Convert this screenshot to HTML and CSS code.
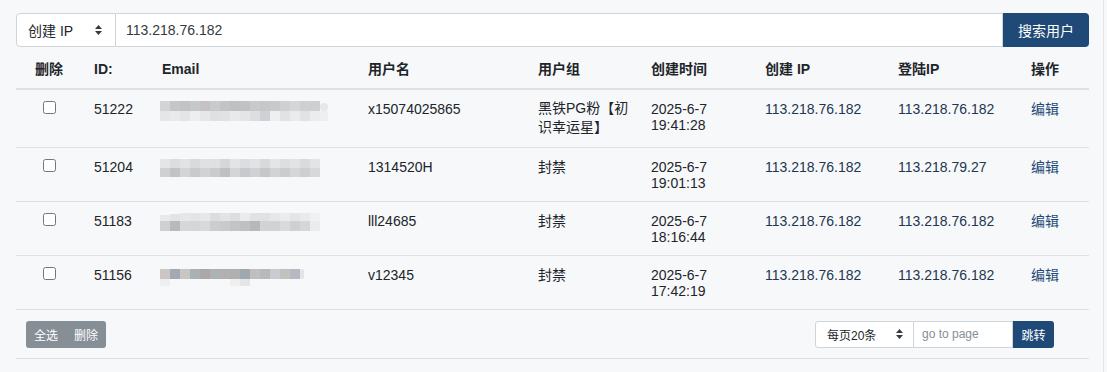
FILE: index.html
```
<!DOCTYPE html>
<html lang="zh-CN">
<head>
    <meta charset="UTF-8">
    <title>用户列表</title>
    <link rel="stylesheet" href="styles.css">
</head>
<body>
    <div class="page">
        <div class="search-bar">
            <div class="search-field">
                <span>创建 IP</span>
                <svg class="caret" width="7" height="10" viewBox="0 0 7 10"><path d="M3.5 0L7 4H0z M0 6h7L3.5 10z" fill="#343a40"/></svg>
            </div>
            <input class="search-input" type="text" value="113.218.76.182">
            <button class="btn btn-primary search-btn">搜索用户</button>
        </div>

        <table class="user-table">
            <colgroup>
                <col class="w-check"><col class="w-id"><col class="w-email"><col class="w-name">
                <col class="w-group"><col class="w-time"><col class="w-ip"><col class="w-ip"><col class="w-op">
            </colgroup>
            <thead>
                <tr>
                    <th class="center">删除</th>
                    <th>ID:</th>
                    <th>Email</th>
                    <th>用户名</th>
                    <th>用户组</th>
                    <th>创建时间</th>
                    <th>创建 IP</th>
                    <th>登陆IP</th>
                    <th>操作</th>
                </tr>
            </thead>
            <tbody>
                <tr>
                    <td class="center"><input type="checkbox" class="check"></td>
                    <td>51222</td>
                    <td>
                        <svg class="mosaic" width="170" height="20" viewBox="0 0 170 20">
                            <rect x="0" y="0" width="10" height="10" fill="#d3d4d6"/><rect x="10" y="0" width="10" height="10" fill="#c5c6c8"/>
                            <rect x="20" y="0" width="10" height="10" fill="#c2c3c5"/><rect x="30" y="0" width="10" height="10" fill="#c6c7c9"/>
                            <rect x="40" y="0" width="10" height="10" fill="#c4c2c3"/><rect x="50" y="0" width="10" height="10" fill="#c8cacd"/>
                            <rect x="60" y="0" width="10" height="10" fill="#c3c4c6"/><rect x="70" y="0" width="10" height="10" fill="#bfc0c2"/>
                            <rect x="80" y="0" width="10" height="10" fill="#c1c2c5"/><rect x="90" y="0" width="10" height="10" fill="#c8c9cb"/>
                            <rect x="100" y="0" width="10" height="10" fill="#c5c7ca"/><rect x="110" y="0" width="10" height="10" fill="#c8c9ca"/>
                            <rect x="120" y="0" width="10" height="10" fill="#cfd0d1"/><rect x="130" y="0" width="10" height="10" fill="#d4d6d9"/>
                            <rect x="140" y="0" width="10" height="10" fill="#d0cfd1"/><rect x="150" y="0" width="10" height="10" fill="#cdcfd1"/>
                            <rect x="160" y="2" width="8" height="8" rx="4" fill="#e6e7e8"/>
                            <rect x="0" y="10" width="10" height="10" fill="#e5e6e7"/><rect x="10" y="10" width="10" height="10" fill="#e9eaea"/>
                            <rect x="20" y="10" width="10" height="10" fill="#e3e4e5"/><rect x="30" y="10" width="10" height="10" fill="#eceef0"/>
                            <rect x="40" y="10" width="10" height="10" fill="#e6e7e6"/><rect x="50" y="10" width="10" height="10" fill="#dfe0e2"/>
                            <rect x="60" y="10" width="10" height="10" fill="#e1e2e4"/><rect x="70" y="10" width="10" height="10" fill="#e8e9ea"/>
                            <rect x="80" y="10" width="10" height="10" fill="#e4e5e6"/><rect x="90" y="10" width="10" height="10" fill="#dcdedf"/>
                            <rect x="100" y="10" width="10" height="10" fill="#cdd0d4"/><rect x="110" y="10" width="10" height="10" fill="#eeeff0"/>
                            <rect x="120" y="10" width="10" height="10" fill="#e1e2e4"/><rect x="130" y="10" width="10" height="10" fill="#eaebec"/>
                            <rect x="140" y="10" width="10" height="10" fill="#e0e2e5"/><rect x="150" y="10" width="10" height="10" fill="#ebecee"/>
                            <rect x="160" y="10" width="8" height="10" fill="#eeeff0"/>
                        </svg>
                    </td>
                    <td>x15074025865</td>
                    <td class="wrap">黑铁PG粉【初<br>识幸运星】</td>
                    <td>2025-6-7 19:41:28</td>
                    <td class="ip">113.218.76.182</td>
                    <td class="ip">113.218.76.182</td>
                    <td><a href="#" class="edit">编辑</a></td>
                </tr>
                <tr>
                    <td class="center"><input type="checkbox" class="check"></td>
                    <td>51204</td>
                    <td>
                        <svg class="mosaic" width="170" height="20" viewBox="0 0 170 20">
                            <rect x="0" y="0" width="10" height="9" fill="#e4e5e6"/><rect x="10" y="0" width="10" height="9" fill="#dcdde0"/>
                            <rect x="20" y="0" width="10" height="9" fill="#e2e3e5"/><rect x="30" y="0" width="10" height="9" fill="#d9dadc"/>
                            <rect x="40" y="0" width="10" height="9" fill="#e0e1e3"/><rect x="50" y="0" width="10" height="9" fill="#dfe0e2"/>
                            <rect x="60" y="0" width="10" height="9" fill="#d6d7d9"/><rect x="70" y="0" width="10" height="9" fill="#e3e4e5"/>
                            <rect x="80" y="0" width="10" height="9" fill="#dcdde0"/><rect x="90" y="0" width="10" height="9" fill="#e1e2e4"/>
                            <rect x="100" y="0" width="10" height="9" fill="#d8d9db"/><rect x="110" y="0" width="10" height="9" fill="#e4e5e7"/>
                            <rect x="120" y="0" width="10" height="9" fill="#dddee0"/><rect x="130" y="0" width="10" height="9" fill="#e2e3e5"/>
                            <rect x="140" y="0" width="10" height="9" fill="#dadbdd"/><rect x="150" y="0" width="10" height="9" fill="#e3e4e6"/>
                            <rect x="0" y="9" width="10" height="9" fill="#cfd0d2"/><rect x="10" y="9" width="10" height="9" fill="#c2c3c6"/>
                            <rect x="20" y="9" width="10" height="9" fill="#d3d4d6"/><rect x="30" y="9" width="10" height="9" fill="#c9cacc"/>
                            <rect x="40" y="9" width="10" height="9" fill="#d1d2d4"/><rect x="50" y="9" width="10" height="9" fill="#cacbcd"/>
                            <rect x="60" y="9" width="10" height="9" fill="#bfc0c3"/><rect x="70" y="9" width="10" height="9" fill="#d4d5d7"/>
                            <rect x="80" y="9" width="10" height="9" fill="#c8c9cc"/><rect x="90" y="9" width="10" height="9" fill="#d0d1d3"/>
                            <rect x="100" y="9" width="10" height="9" fill="#c6c7ca"/><rect x="110" y="9" width="10" height="9" fill="#d2d3d5"/>
                            <rect x="120" y="9" width="10" height="9" fill="#cbcccf"/><rect x="130" y="9" width="10" height="9" fill="#d5d6d8"/>
                            <rect x="140" y="9" width="10" height="9" fill="#cdced0"/><rect x="150" y="9" width="10" height="9" fill="#d7d8da"/>
                        </svg>
                    </td>
                    <td>1314520H</td>
                    <td>封禁</td>
                    <td>2025-6-7 19:01:13</td>
                    <td class="ip">113.218.76.182</td>
                    <td class="ip">113.218.79.27</td>
                    <td><a href="#" class="edit">编辑</a></td>
                </tr>
                <tr>
                    <td class="center"><input type="checkbox" class="check"></td>
                    <td>51183</td>
                    <td>
                        <svg class="mosaic" width="170" height="20" viewBox="0 0 170 20">
                            <rect x="0" y="2" width="10" height="6" fill="#e8e9eb"/><rect x="10" y="1" width="10" height="7" fill="#e3e4e6"/>
                            <rect x="20" y="0" width="10" height="8" fill="#e6e7e9"/><rect x="30" y="0" width="10" height="8" fill="#e4e5e7"/>
                            <rect x="40" y="0" width="10" height="8" fill="#e7e8ea"/><rect x="50" y="0" width="10" height="8" fill="#dcdde0"/>
                            <rect x="60" y="0" width="10" height="8" fill="#e2e3e5"/><rect x="70" y="0" width="10" height="8" fill="#dddee0"/>
                            <rect x="80" y="0" width="10" height="8" fill="#eaebec"/><rect x="90" y="0" width="10" height="8" fill="#e1e2e5"/>
                            <rect x="100" y="0" width="10" height="8" fill="#e0e1e4"/><rect x="110" y="0" width="10" height="8" fill="#e6e7e9"/>
                            <rect x="120" y="0" width="10" height="8" fill="#ebeced"/><rect x="130" y="0" width="10" height="8" fill="#e4e5e7"/>
                            <rect x="140" y="0" width="10" height="8" fill="#e9eaeb"/><rect x="150" y="0" width="10" height="8" fill="#f0f1f2"/>
                            <rect x="0" y="8" width="10" height="10" fill="#cfd0d1"/><rect x="10" y="8" width="10" height="10" fill="#b8b8bd"/>
                            <rect x="20" y="8" width="10" height="10" fill="#d6d7da"/><rect x="30" y="8" width="10" height="10" fill="#d5d6d9"/>
                            <rect x="40" y="8" width="10" height="10" fill="#d9d9db"/><rect x="50" y="8" width="10" height="10" fill="#cdcdcf"/>
                            <rect x="60" y="8" width="10" height="10" fill="#c9cad0"/><rect x="70" y="8" width="10" height="10" fill="#c4c4c7"/>
                            <rect x="80" y="8" width="10" height="10" fill="#bfc0c1"/><rect x="90" y="8" width="10" height="10" fill="#b7b8be"/>
                            <rect x="100" y="8" width="10" height="10" fill="#d3d3d4"/><rect x="110" y="8" width="10" height="10" fill="#d1d2d2"/>
                            <rect x="120" y="8" width="10" height="10" fill="#d9dadd"/><rect x="130" y="8" width="10" height="10" fill="#cfd0d2"/>
                            <rect x="140" y="8" width="10" height="10" fill="#d4d6d9"/><rect x="150" y="8" width="10" height="10" fill="#eaebec"/>
                        </svg>
                    </td>
                    <td>lll24685</td>
                    <td>封禁</td>
                    <td>2025-6-7 18:16:44</td>
                    <td class="ip">113.218.76.182</td>
                    <td class="ip">113.218.76.182</td>
                    <td><a href="#" class="edit">编辑</a></td>
                </tr>
                <tr>
                    <td class="center"><input type="checkbox" class="check"></td>
                    <td>51156</td>
                    <td>
                        <svg class="mosaic" width="170" height="20" viewBox="0 0 170 20">
                            <rect x="0" y="2" width="10" height="10" fill="#cbc6c4"/><rect x="10" y="2" width="10" height="10" fill="#a3a9b2"/>
                            <rect x="20" y="2" width="10" height="10" fill="#c9c5c4"/><rect x="30" y="2" width="10" height="10" fill="#aab0b4"/>
                            <rect x="40" y="2" width="10" height="10" fill="#aca8aa"/><rect x="50" y="2" width="10" height="10" fill="#abb3b5"/>
                            <rect x="60" y="2" width="10" height="10" fill="#b3b0b1"/><rect x="70" y="2" width="10" height="10" fill="#b0b0af"/>
                            <rect x="80" y="2" width="10" height="10" fill="#a0a8af"/><rect x="90" y="2" width="10" height="10" fill="#c0bebf"/>
                            <rect x="100" y="2" width="10" height="10" fill="#b8b9b9"/><rect x="110" y="2" width="10" height="10" fill="#c9cbd0"/>
                            <rect x="120" y="2" width="10" height="10" fill="#c3c1bf"/><rect x="130" y="2" width="10" height="10" fill="#b6b8c2"/>
                            <rect x="140" y="2" width="4" height="10" rx="2" fill="#e3e4e7"/>
                            <rect x="0" y="12" width="10" height="7" fill="#eeeff1"/>
                            <rect x="70" y="12" width="10" height="7" fill="#f0eff0"/><rect x="80" y="12" width="10" height="7" fill="#e3e5e8"/>
                        </svg>
                    </td>
                    <td>v12345</td>
                    <td>封禁</td>
                    <td>2025-6-7 17:42:19</td>
                    <td class="ip">113.218.76.182</td>
                    <td class="ip">113.218.76.182</td>
                    <td><a href="#" class="edit">编辑</a></td>
                </tr>
            </tbody>
        </table>

        <div class="table-footer">
            <div class="btn-group">
                <button class="btn btn-secondary btn-sm">全选</button>
                <button class="btn btn-secondary btn-sm">删除</button>
            </div>
            <div class="pager">
                <div class="pager-select">
                    <span>每页20条</span>
                    <svg class="caret" width="7" height="10" viewBox="0 0 7 10"><path d="M3.5 0L7 4H0z M0 6h7L3.5 10z" fill="#343a40"/></svg>
                </div>
                <input class="pager-input" type="text" placeholder="go to page">
                <button class="btn btn-primary btn-sm pager-btn">跳转</button>
            </div>
        </div>
    </div>
</body>
</html>
```

FILE: styles.css
```
body {
    margin: 0;
    background-color: #f7f8fa;
    font-family: "Liberation Sans", Arial, "Noto Sans CJK SC", sans-serif;
    font-size: 14px;
    color: #212529;
}
.page {
    width: 1104px;
    min-height: 100vh;
    border-right: 1px solid #e3e5e9;
    padding: 13px 0 0 16px;
    box-sizing: border-box;
}
.page > * {
    width: 1073px;
}

/* search bar */
.search-bar {
    display: flex;
    height: 34px;
}
.search-field {
    width: 100px;
    box-sizing: border-box;
    display: flex;
    align-items: center;
    justify-content: space-between;
    padding: 0 13px 0 11px;
    background-color: #fff;
    border: 1px solid #ced4da;
    border-radius: 4px 0 0 4px;
}
.search-input {
    flex: 1;
    box-sizing: border-box;
    height: 34px;
    margin: 0;
    padding: 0 10px;
    border: 1px solid #ced4da;
    border-left: none;
    font-family: inherit;
    font-size: 14px;
    color: #343a40;
    background-color: #fff;
    outline: none;
}
.btn {
    border: none;
    margin: 0;
    color: #fff;
    font-family: inherit;
    cursor: pointer;
}
.btn-primary {
    background-color: #1f4a77;
}
.btn-secondary {
    background-color: #868e96;
}
.btn-sm {
    font-size: 12px;
    padding: 0 8px;
    height: 27px;
}
.search-btn {
    width: 86px;
    font-size: 14px;
    border-radius: 0 4px 4px 0;
}

/* table */
.user-table {
    table-layout: fixed;
    border-collapse: collapse;
}
.w-check { width: 66px; }
.w-id { width: 68px; }
.w-email { width: 206px; }
.w-name { width: 170px; }
.w-group { width: 113px; }
.w-time { width: 114px; }
.w-ip { width: 133px; }
.w-op { width: 70px; }
.user-table th {
    text-align: left;
    font-weight: bold;
    line-height: 16px;
    padding: 14px 12px 11px;
    border-bottom: 2px solid #dee2e6;
}
.user-table td {
    vertical-align: top;
    line-height: 16px;
    padding: 11px 12px 10px;
    border-bottom: 1px solid #dee2e6;
}
.user-table .center {
    text-align: center;
}
.user-table td.wrap {
    white-space: nowrap;
    line-height: 19px;
    padding-top: 9px;
}
.user-table .ip {
    color: #23364f;
}
.check {
    display: block;
    width: 13px;
    height: 13px;
    margin: 0 auto;
}
.mosaic {
    display: block;
    margin-left: -2px;
}
.edit {
    color: #1f4a77;
    text-decoration: none;
}

/* footer */
.table-footer {
    display: flex;
    justify-content: space-between;
    align-items: center;
    box-sizing: border-box;
    height: 49px;
    padding: 0 35px 0 10px;
    border-bottom: 1px solid #dee2e6;
}
.btn-group {
    display: flex;
    border-radius: 3px;
    overflow: hidden;
}
.btn-group .btn {
    width: 40px;
}
.pager {
    display: flex;
    height: 27px;
}
.pager-select {
    width: 99px;
    box-sizing: border-box;
    display: flex;
    align-items: center;
    justify-content: space-between;
    padding: 0 10px 0 11px;
    font-size: 12px;
    background-color: #fff;
    border: 1px solid #ced4da;
    border-radius: 3px 0 0 3px;
}
.pager-input {
    width: 99px;
    box-sizing: border-box;
    height: 27px;
    margin: 0;
    padding: 0 8px;
    border: 1px solid #ced4da;
    border-left: none;
    font-family: inherit;
    font-size: 12px;
    outline: none;
}
.pager-input::placeholder {
    color: #868e96;
}
.pager-btn {
    width: 41px;
    border-radius: 0 3px 3px 0;
}
```
